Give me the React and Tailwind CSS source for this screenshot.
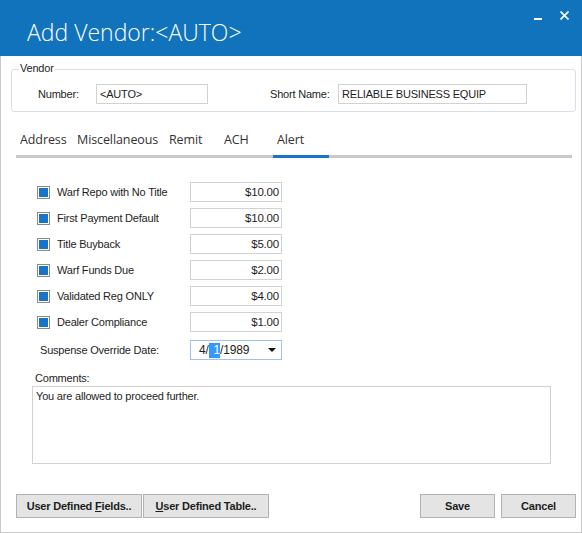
import React from "react";

const alerts = [
  { label: "Warf Repo with No Title", amount: "$10.00" },
  { label: "First Payment Default", amount: "$10.00" },
  { label: "Title Buyback", amount: "$5.00" },
  { label: "Warf Funds Due", amount: "$2.00" },
  { label: "Validated Reg ONLY", amount: "$4.00" },
  { label: "Dealer Compliance", amount: "$1.00" },
];

const tabs = [
  { name: "Address", w: "w-[57px]" },
  { name: "Miscellaneous", w: "w-[92px]" },
  { name: "Remit", w: "w-[55px]" },
  { name: "ACH", w: "w-[53px]" },
  { name: "Alert", w: "w-[56px]", active: true },
];

const sans = "font-['Liberation_Sans',Arial,sans-serif] text-[11px] tracking-[-0.2px] text-[#1e1e1e]";

function Checkbox() {
  return (
    <div className="w-[13px] h-[13px] border border-[#8a8a8a] bg-white p-[1px]">
      <div className="w-full h-full bg-[#1a74c6]" />
    </div>
  );
}

function Button({ children, className = "" }) {
  return (
    <button
      className={`h-[24px] bg-[#e4e4e4] border border-[#b2b2b2] font-bold text-[11px] text-[#1e1e1e] font-['Liberation_Sans',Arial,sans-serif] ${className}`}
    >
      {children}
    </button>
  );
}

export default function App() {
  return (
    <div className="w-[582px] h-[533px] bg-white flex flex-col overflow-hidden">
      {/* Title bar */}
      <div className="h-[56px] bg-[#1173bb] flex items-start justify-between shrink-0">
        <div className="pl-[27px] pt-[17px] text-white text-[23px] font-light leading-[30px] font-['Open_Sans',sans-serif]">
          Add Vendor:&lt;AUTO&gt;
        </div>
        <div className="flex items-start pt-[11px] pr-[13px]">
          <div className="w-[8px] h-[2px] bg-white mt-[7px]" />
          <svg width="9" height="9" viewBox="0 0 9 9" className="ml-[18px]">
            <path d="M0.5 0.5 L8.5 8.5 M8.5 0.5 L0.5 8.5" stroke="white" strokeWidth="1.6" />
          </svg>
        </div>
      </div>

      {/* Window body */}
      <div className={`flex-1 border-x border-b border-[#c9c9c9] flex flex-col ${sans}`}>
        {/* Vendor group */}
        <div className="relative ml-[10px] mt-[13px] w-[565px] h-[43px] border border-[#d8dfe6] rounded-[3px] flex items-start pt-[14px] pl-[26px]">
          <span className="absolute -top-[8px] left-[7px] bg-white px-[1px] leading-[13px]">Vendor</span>
          <span className="w-[58px] leading-[20px]">Number:</span>
          <div className="w-[112px] h-[20px] border border-[#d2d2d2] px-[3px] leading-[18px]">&lt;AUTO&gt;</div>
          <span className="ml-[62px] w-[68px] leading-[20px]">Short Name:</span>
          <div className="w-[189px] h-[20px] border border-[#d2d2d2] px-[3px] leading-[18px]">RELIABLE BUSINESS EQUIP</div>
        </div>

        {/* Tabs */}
        <div className="ml-[15px] mt-[19px] w-[556px] flex border-b-[3px] border-[#c8c8c8] font-['Open_Sans',sans-serif] text-[12.5px] tracking-[-0.1px] text-[#333333]">
          {tabs.map((t) => (
            <div
              key={t.name}
              className={`${t.w} pl-[4px] leading-[18px] pb-[6px] -mb-[3px] border-b-[3px] ${t.active ? "border-[#1a74c6]" : "border-transparent"}`}
            >
              {t.name}
            </div>
          ))}
        </div>

        {/* Alert rows */}
        <div className="mt-[24px] flex flex-col gap-[6px]">
          {alerts.map((a) => (
            <div key={a.label} className="flex items-center h-[20px]">
              <div className="ml-[36px] w-[20px]">
                <Checkbox />
              </div>
              <span className="w-[133px]">{a.label}</span>
              <div className="w-[92px] h-[20px] border border-[#d2d2d2] text-right pr-[2px] leading-[18px] text-[11.5px]">
                {a.amount}
              </div>
            </div>
          ))}
        </div>

        {/* Suspense date */}
        <div className="mt-[8px] flex items-center h-[20px]">
          <span className="ml-[39px] w-[150px]">Suspense Override Date:</span>
          <div className="w-[92px] h-[20px] border border-[#9fc3e8] flex items-center pl-[8px] pr-[5px] text-[12px]">
            <span>4/</span>
            <span className="bg-[#3399ff] text-white pl-[5px] leading-[15px]">1</span>
            <span>/1989</span>
            <svg width="8" height="4" viewBox="0 0 8 4" className="ml-auto">
              <path d="M0 0 H8 L4 4 Z" fill="#111" />
            </svg>
          </div>
        </div>

        {/* Comments */}
        <span className="ml-[34px] mt-[11px] leading-[15px]">Comments:</span>
        <div className="ml-[31px] w-[519px] h-[78px] border border-[#d2d2d2] px-[3px] pt-[2px] leading-[14px]">
          You are allowed to proceed further.
        </div>

        {/* Buttons */}
        <div className="mt-[30px] flex items-start">
          <Button className="ml-[15px] w-[126px]">
            User Defined <span className="underline">F</span>ields..
          </Button>
          <Button className="ml-[1px] w-[126px]">
            <span className="underline">U</span>ser Defined Table..
          </Button>
          <Button className="ml-auto w-[75px]">Save</Button>
          <Button className="ml-[6px] mr-[5px] w-[75px]">Cancel</Button>
        </div>
      </div>
    </div>
  );
}
